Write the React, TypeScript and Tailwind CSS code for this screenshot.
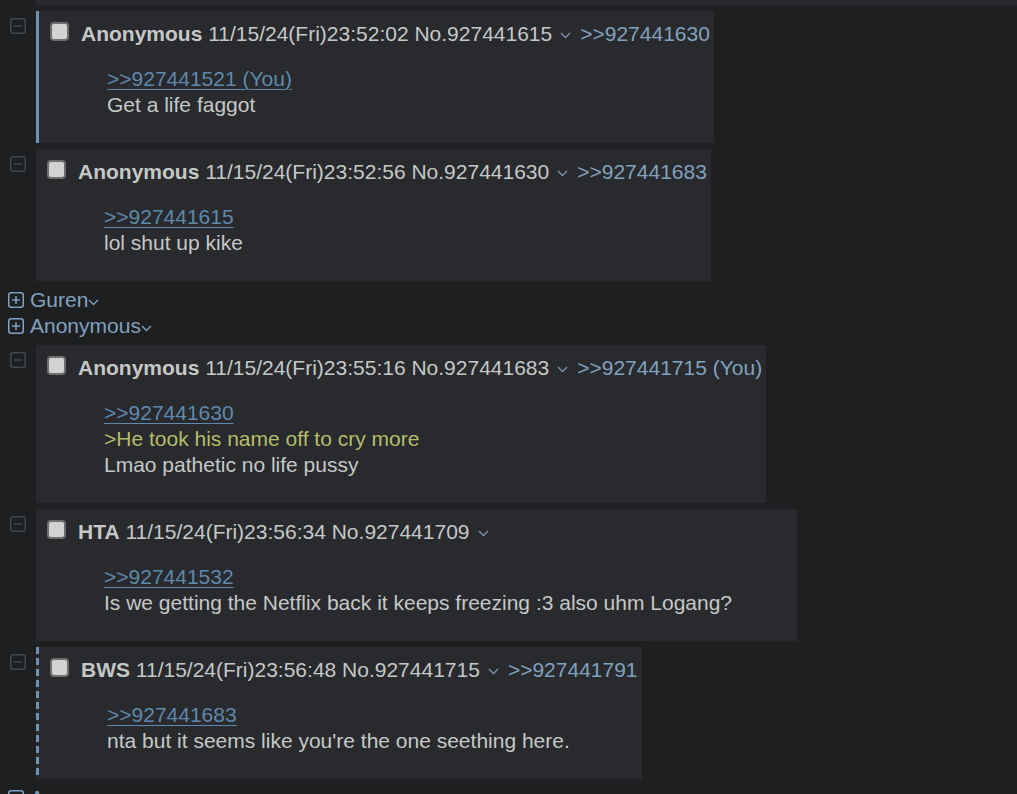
import React from "react";

type Line = { kind: "quote" | "green" | "text"; text: string };
type PostProps = {
  name: string;
  date: string;
  no: string;
  backlinks: string[];
  lines: Line[];
  border?: "solid" | "dashed" | "none";
};

function MinusIcon() {
  return (
    <svg width="16" height="16" viewBox="0 0 16 16" className="block">
      <rect x="0.75" y="0.75" width="14.5" height="14.5" rx="2.5" fill="none" stroke="#3f4752" strokeWidth="1.5" />
      <line x1="4" y1="8" x2="12" y2="8" stroke="#3f4752" strokeWidth="1.5" />
    </svg>
  );
}

function PlusIcon() {
  return (
    <svg width="16" height="16" viewBox="0 0 16 16" className="block">
      <rect x="0.75" y="0.75" width="14.5" height="14.5" rx="2.5" fill="none" stroke="#81a2be" strokeWidth="1.5" />
      <line x1="4" y1="8" x2="12" y2="8" stroke="#81a2be" strokeWidth="1.5" />
      <line x1="8" y1="4" x2="8" y2="12" stroke="#81a2be" strokeWidth="1.5" />
    </svg>
  );
}

function Chevron({ color = "#7f93a8" }: { color?: string }) {
  return (
    <svg width="11" height="7" viewBox="0 0 11 7" className="block">
      <polyline points="1,1 5.5,5.5 10,1" fill="none" stroke={color} strokeWidth="1.4" />
    </svg>
  );
}

function Checkbox() {
  return <div className="ml-[7px] mb-[6px] h-[19px] w-[19px] shrink-0 rounded-[4px] border-2 border-[#6e6e6e] bg-[#d3d3d3]" />;
}

function Post({ name, date, no, backlinks, lines, border = "none" }: PostProps) {
  return (
    <div className="flex">
      <div className="w-[36px] shrink-0 pl-[10px] pt-[7px]">
        <MinusIcon />
      </div>
      <div className="flex bg-[#282a2e]">
        {border === "solid" && <div className="w-[3px] shrink-0 bg-[#7191b1]" />}
        {border === "dashed" && (
          <div className="w-[3px] shrink-0 bg-[repeating-linear-gradient(to_bottom,#7191b1_0px,#7191b1_7px,transparent_7px,transparent_11px)]" />
        )}
        <div className="pl-[4px] pr-[4px] pt-[10px] pb-[25px]">
          <div className="flex h-[26px] items-center whitespace-nowrap">
            <Checkbox />
            <span className="ml-[12px] font-bold text-[#c5c8c6]">{name}</span>
            <span className="text-[#c5c8c6]">&nbsp;{date} No.{no}</span>
            <span className="ml-[8px] mt-[2px]">
              <Chevron />
            </span>
            {backlinks.map((b, i) => (
              <span key={i} className="ml-[9px] text-[#81a2be]">
                {b}
              </span>
            ))}
          </div>
          <div className="ml-[64px] mr-[61px] mt-[19px] whitespace-nowrap">
            {lines.map((l, i) =>
              l.kind === "quote" ? (
                <div key={i} className="h-[26px]">
                  <span className="text-[#5f89ac] underline decoration-1 underline-offset-[3px]">{l.text}</span>
                </div>
              ) : l.kind === "green" ? (
                <div key={i} className="h-[26px] text-[#b5bd68]">
                  {l.text}
                </div>
              ) : (
                <div key={i} className="h-[26px] text-[#c5c8c6]">
                  {l.text}
                </div>
              )
            )}
          </div>
        </div>
      </div>
    </div>
  );
}

function Collapsed({ name }: { name: string }) {
  return (
    <div className="flex h-[26px] items-center">
      <div className="ml-[8px] mr-[6px]">
        <PlusIcon />
      </div>
      <span className="text-[#81a2be]">{name}</span>
      <span className="mt-[4px]">
        <Chevron color="#81a2be" />
      </span>
    </div>
  );
}

export default function App() {
  return (
    <div className="h-[794px] w-[1017px] overflow-hidden bg-[#1d1f21] font-['Liberation_Sans',Arial,sans-serif] text-[21px] leading-[26px]">
      <div className="flex flex-col gap-[6px]">
        <div className="ml-[36px] h-[5px] bg-[#282a2e]" />
        <Post
          name="Anonymous"
          date="11/15/24(Fri)23:52:02"
          no="927441615"
          backlinks={[">>927441630"]}
          border="solid"
          lines={[
            { kind: "quote", text: ">>927441521 (You)" },
            { kind: "text", text: "Get a life faggot" },
          ]}
        />
        <Post
          name="Anonymous"
          date="11/15/24(Fri)23:52:56"
          no="927441630"
          backlinks={[">>927441683"]}
          lines={[
            { kind: "quote", text: ">>927441615" },
            { kind: "text", text: "lol shut up kike" },
          ]}
        />
        <div className="flex flex-col">
          <Collapsed name="Guren" />
          <Collapsed name="Anonymous" />
        </div>
        <Post
          name="Anonymous"
          date="11/15/24(Fri)23:55:16"
          no="927441683"
          backlinks={[">>927441715 (You)"]}
          lines={[
            { kind: "quote", text: ">>927441630" },
            { kind: "green", text: ">He took his name off to cry more" },
            { kind: "text", text: "Lmao pathetic no life pussy" },
          ]}
        />
        <Post
          name="HTA"
          date="11/15/24(Fri)23:56:34"
          no="927441709"
          backlinks={[]}
          lines={[
            { kind: "quote", text: ">>927441532" },
            { kind: "text", text: "Is we getting the Netflix back it keeps freezing :3 also uhm Logang?" },
          ]}
        />
        <Post
          name="BWS"
          date="11/15/24(Fri)23:56:48"
          no="927441715"
          backlinks={[">>927441791"]}
          border="dashed"
          lines={[
            { kind: "quote", text: ">>927441683" },
            { kind: "text", text: "nta but it seems like you're the one seething here." },
          ]}
        />
        <Collapsed name="Anonymous" />
      </div>
    </div>
  );
}
